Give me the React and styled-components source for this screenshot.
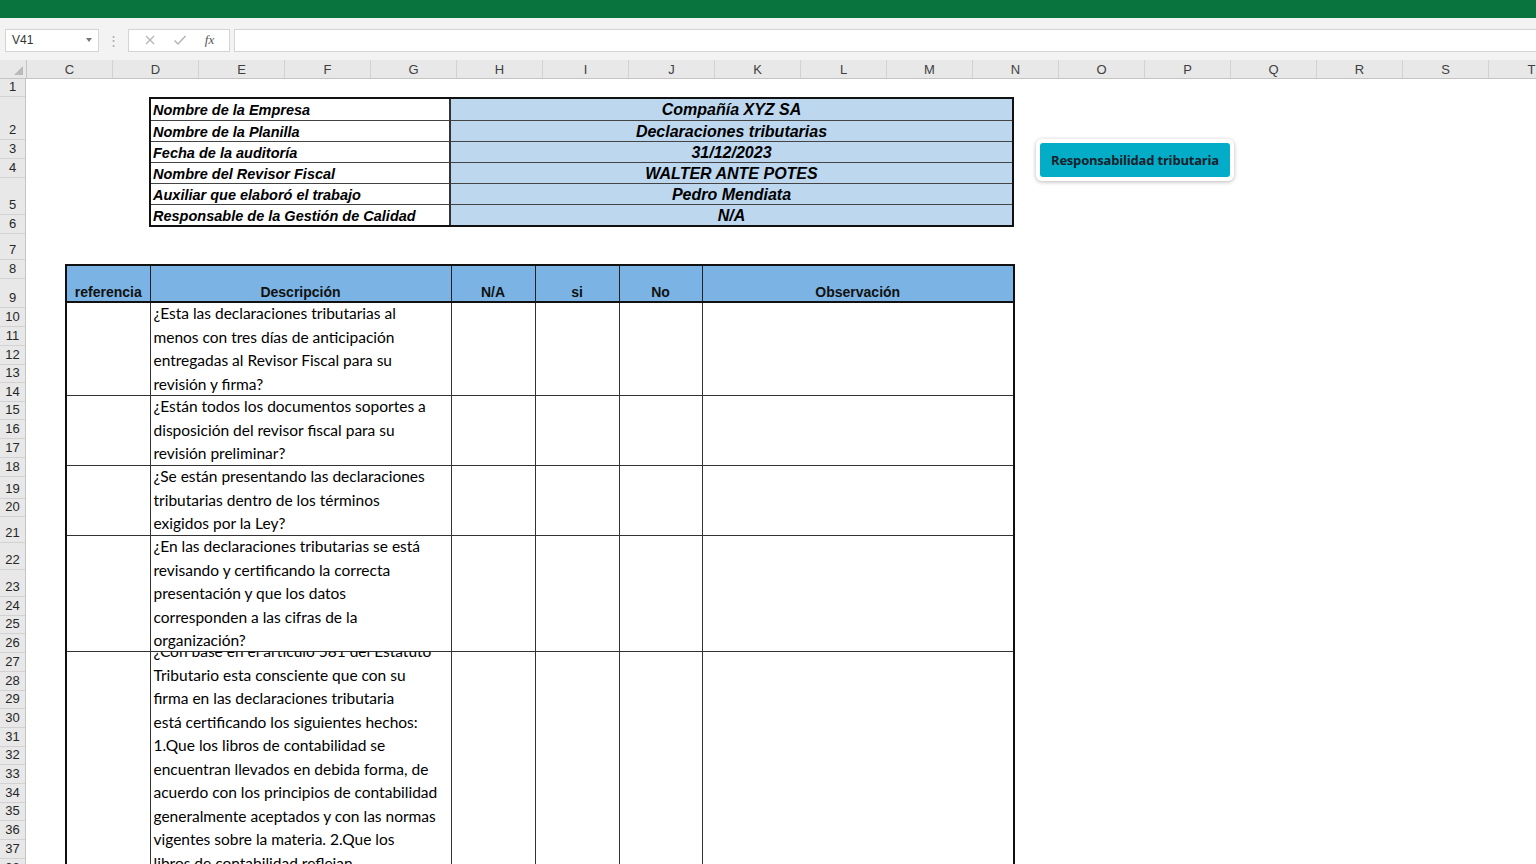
import React from "react";
import styled, { createGlobalStyle } from "styled-components";

const GlobalStyle = createGlobalStyle`
  html, body {
    margin: 0;
    padding: 0;
    height: 100%;
    overflow: hidden;
    background: #fff;
  }
  body {
    font-family: "Liberation Sans", Arial, sans-serif;
  }
`;

const COLS = ["C", "D", "E", "F", "G", "H", "I", "J", "K", "L", "M", "N", "O", "P", "Q", "R", "S", "T"];

// heights of rows 1..38 as they show on screen
const ROW_HEIGHTS = [
  18, 43, 19, 19, 37, 19, 26, 19, 29,
  19, 19, 19, 18, 19, 18, 19, 19, 19,
  22, 18, 26, 27, 27,
  19, 18, 19, 19, 19, 18, 19, 19, 18, 19, 19, 18, 19, 19, 19,
];

const INFO = [
  ["Nombre de la Empresa", "Compañía XYZ SA"],
  ["Nombre de la Planilla", "Declaraciones tributarias"],
  ["Fecha de la auditoría", "31/12/2023"],
  ["Nombre del Revisor Fiscal", "WALTER ANTE POTES"],
  ["Auxiliar que elaboró el trabajo", "Pedro Mendiata"],
  ["Responsable de la Gestión de Calidad", "N/A"],
];

const QUESTIONS = [
  {
    height: 92,
    lines: [
      "¿Esta las declaraciones tributarias al",
      "menos con tres días de anticipación",
      "entregadas al Revisor Fiscal para su",
      "revisión y firma?",
    ],
  },
  {
    height: 69,
    lines: [
      "¿Están todos los documentos soportes a",
      "disposición del revisor fiscal para su",
      "revisión preliminar?",
    ],
  },
  {
    height: 69,
    lines: [
      "¿Se están presentando las declaraciones",
      "tributarias dentro de los términos",
      "exigidos por la Ley?",
    ],
  },
  {
    height: 115,
    overflow: true,
    lines: [
      "¿En las declaraciones tributarias se está",
      "revisando y certificando la correcta",
      "presentación y que los datos",
      "corresponden a las cifras de la",
      "organización?",
    ],
  },
  {
    height: 240,
    shift: -12,
    lines: [
      "¿Con base en el artículo 581 del Estatuto",
      "Tributario esta consciente que con su",
      "firma en las declaraciones tributaria",
      "está certificando los siguientes hechos:",
      "1.Que los libros de contabilidad se",
      "encuentran llevados en debida forma, de",
      "acuerdo con los principios de contabilidad",
      "generalmente aceptados y con las normas",
      "vigentes sobre la materia. 2.Que los",
      "libros de contabilidad reflejan",
      "razonablemente la situación financiera",
    ],
  },
];

/* ---------- window chrome ---------- */

const TitleBar = styled.div`
  height: 18px;
  background: #0a743f;
`;

const FormulaBar = styled.div`
  height: 42px;
  background: #f3f3f3;
  display: flex;
  align-items: center;
  padding: 2px 0 0 5px;
  box-sizing: border-box;
`;

const NameBox = styled.div`
  width: 94px;
  height: 23px;
  box-sizing: border-box;
  background: #fff;
  border: 1px solid #d4d4d4;
  display: flex;
  align-items: center;
  justify-content: space-between;
  padding: 0 6px 0 6px;
  font-size: 12px;
  color: #333;
`;

const Caret = styled.span`
  width: 0;
  height: 0;
  border-left: 3px solid transparent;
  border-right: 3px solid transparent;
  border-top: 4px solid #777;
`;

const Dots = styled.span`
  width: 29px;
  text-align: center;
  color: #a9a9a9;
  font-size: 13px;
  line-height: 1;
`;

const ActionBox = styled.div`
  width: 102px;
  height: 23px;
  box-sizing: border-box;
  background: #fff;
  border: 1px solid #d4d4d4;
  display: flex;
  align-items: center;
  justify-content: space-around;
  padding: 0 6px;
  color: #b8b8b8;
`;

const Fx = styled.span`
  font-family: "Liberation Serif", "Times New Roman", serif;
  font-style: italic;
  font-size: 13px;
  color: #555;
`;

const FormulaInput = styled.div`
  flex: 1;
  height: 23px;
  margin-left: 4px;
  box-sizing: border-box;
  background: #fff;
  border: 1px solid #d4d4d4;
  border-right: none;
`;

const HeaderRow = styled.div`
  display: flex;
  height: 19px;
  background: #e8e8e8;
  border-bottom: 1px solid #c4c4c4;
  box-sizing: border-box;
`;

const Corner = styled.div`
  width: 27px;
  flex: none;
  position: relative;
  border-right: 1px solid #c4c4c4;
  box-sizing: border-box;
`;

const CornerMark = styled.span`
  position: absolute;
  right: 3px;
  bottom: 3px;
  width: 0;
  height: 0;
  border-left: 9px solid transparent;
  border-bottom: 9px solid #b9b9b9;
`;

const ColLetter = styled.div`
  width: 86px;
  flex: none;
  box-sizing: border-box;
  border-right: 1px solid #d2d2d2;
  text-align: center;
  font-size: 13px;
  line-height: 20px;
  color: #3f3f3f;
`;

/* ---------- grid area ---------- */

const Body = styled.div`
  display: flex;
  height: 785px;
  overflow: hidden;
`;

const RowHeaders = styled.div`
  width: 26px;
  flex: none;
  background: #e8e8e8;
  border-right: 1px solid #c4c4c4;
  box-sizing: border-box;
  display: flex;
  flex-direction: column;
`;

const RowNum = styled.div`
  flex: none;
  height: ${(p) => p.$h}px;
  box-sizing: border-box;
  border-bottom: 1px solid #d2d2d2;
  display: flex;
  align-items: flex-end;
  justify-content: center;
  padding-bottom: 1px;
  font-size: 13px;
  line-height: 17px;
  color: #262626;
`;

const Sheet = styled.div`
  flex: 1;
  position: relative;
  padding: 18px 0 0 39px;
`;

/* ---------- info block ---------- */

const InfoTable = styled.div`
  margin-left: 84px;
  width: 865px;
  box-sizing: border-box;
  border: 2px solid #111;
  display: grid;
  grid-template-columns: 300px 1fr;
  grid-auto-rows: 21px;
`;

const InfoLabel = styled.div`
  border-right: 2px solid #333;
  border-top: ${(p) => (p.$first ? "none" : "1px solid #444")};
  padding-left: 2px;
  font-weight: bold;
  font-style: italic;
  font-size: 14.5px;
  line-height: 22px;
  color: #000;
  white-space: nowrap;
  overflow: hidden;
`;

const InfoValue = styled.div`
  background: #bdd7ee;
  border-top: ${(p) => (p.$first ? "none" : "1px solid #444")};
  text-align: center;
  font-weight: bold;
  font-style: italic;
  font-size: 16px;
  line-height: 21px;
  color: #000;
`;

/* ---------- floating button shape ---------- */

const ButtonFrame = styled.div`
  position: absolute;
  left: 1010px;
  top: 60px;
  padding: 4px;
  background: #fff;
  border-radius: 6px;
  box-shadow: 0 1px 4px rgba(0, 0, 0, 0.28);
`;

const ActionButton = styled.div`
  width: 190px;
  height: 34px;
  border-radius: 3px;
  background: #04adc7;
  display: flex;
  align-items: center;
  justify-content: center;
  font-family: "Open Sans", "Liberation Sans", sans-serif;
  font-weight: 700;
  font-size: 13px;
  letter-spacing: -0.2px;
  color: #16212b;
`;

/* ---------- checklist ---------- */

const Checklist = styled.table`
  margin-top: 37px;
  border-collapse: collapse;
  table-layout: fixed;
  width: 948px;
  border: 2px solid #111;
`;

const HeadCell = styled.th`
  height: 34px;
  padding: 0 0 1px;
  background: #7bb4e4;
  border: 1px solid #222;
  border-bottom: 2px solid #111;
  vertical-align: bottom;
  text-align: center;
  font-family: "Liberation Sans Narrow", "Liberation Sans", sans-serif;
  font-stretch: condensed;
  font-weight: bold;
  font-size: 14px;
  line-height: 16px;
  color: #111;
`;

const Cell = styled.td`
  height: ${(p) => p.$h}px;
  padding: 0;
  border-left: 1px solid #333;
  border-right: 1px solid #333;
  border-top: 1px solid #333;
  vertical-align: top;
`;

const QuestionBox = styled.div`
  height: ${(p) => p.$h}px;
  overflow: ${(p) => (p.$spill ? "visible" : "hidden")};
  position: relative;
`;

const QuestionText = styled.div`
  margin-top: ${(p) => p.$shift || -1}px;
  padding-left: 3px;
  font-family: "Lato", "Open Sans", sans-serif;
  font-size: 15.5px;
  line-height: 23.5px;
  color: #000;
  white-space: nowrap;
`;

const App = () => {
  return (
    <>
      <GlobalStyle />
      <TitleBar />
      <FormulaBar>
        <NameBox>
          <span>V41</span>
          <Caret />
        </NameBox>
        <Dots>⋮</Dots>
        <ActionBox>
          <svg width="12" height="12" viewBox="0 0 12 12">
            <path d="M2 2 L10 10 M10 2 L2 10" stroke="#b5b5b5" strokeWidth="1.3" fill="none" />
          </svg>
          <svg width="14" height="12" viewBox="0 0 14 12">
            <path d="M1.5 6.5 L5 10 L12.5 2" stroke="#b5b5b5" strokeWidth="1.5" fill="none" />
          </svg>
          <Fx>fx</Fx>
        </ActionBox>
        <FormulaInput />
      </FormulaBar>

      <HeaderRow>
        <Corner>
          <CornerMark />
        </Corner>
        {COLS.map((c) => (
          <ColLetter key={c}>{c}</ColLetter>
        ))}
      </HeaderRow>

      <Body>
        <RowHeaders>
          {ROW_HEIGHTS.map((h, i) => (
            <RowNum key={i} $h={h}>
              {i + 1}
            </RowNum>
          ))}
        </RowHeaders>

        <Sheet>
          <InfoTable>
            {INFO.map(([label, value], i) => (
              <React.Fragment key={label}>
                <InfoLabel $first={i === 0}>{label}</InfoLabel>
                <InfoValue $first={i === 0}>{value}</InfoValue>
              </React.Fragment>
            ))}
          </InfoTable>

          <ButtonFrame>
            <ActionButton>Responsabilidad tributaria</ActionButton>
          </ButtonFrame>

          <Checklist>
            <colgroup>
              <col style={{ width: 84 }} />
              <col style={{ width: 301 }} />
              <col style={{ width: 84 }} />
              <col style={{ width: 84 }} />
              <col style={{ width: 83 }} />
              <col style={{ width: 312 }} />
            </colgroup>
            <thead>
              <tr>
                <HeadCell>referencia</HeadCell>
                <HeadCell>Descripción</HeadCell>
                <HeadCell>N/A</HeadCell>
                <HeadCell>si</HeadCell>
                <HeadCell>No</HeadCell>
                <HeadCell>Observación</HeadCell>
              </tr>
            </thead>
            <tbody>
              {QUESTIONS.map((q, i) => (
                <tr key={i}>
                  <Cell $h={q.height} />
                  <Cell $h={q.height}>
                    <QuestionBox $h={q.height} $spill={q.overflow}>
                      <QuestionText $shift={q.shift}>
                        {q.lines.map((l) => (
                          <div key={l}>{l}</div>
                        ))}
                      </QuestionText>
                    </QuestionBox>
                  </Cell>
                  <Cell $h={q.height} />
                  <Cell $h={q.height} />
                  <Cell $h={q.height} />
                  <Cell $h={q.height} />
                </tr>
              ))}
            </tbody>
          </Checklist>
        </Sheet>
      </Body>
    </>
  );
};

export default App;
